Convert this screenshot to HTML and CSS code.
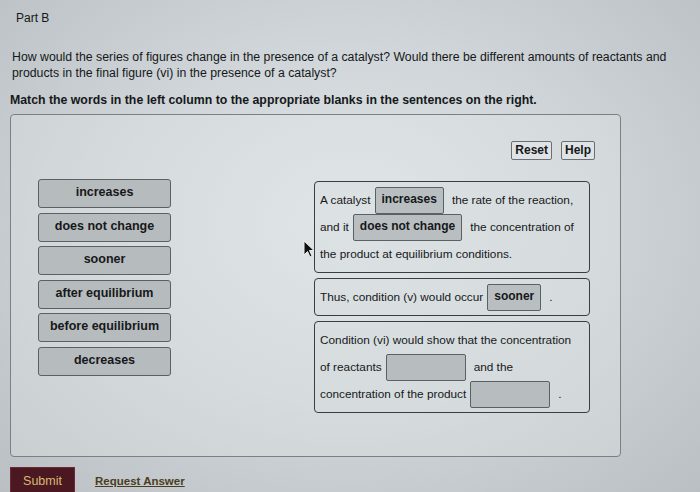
FILE: index.html
```html
<!DOCTYPE html>
<html lang="en">
<head>
    <meta charset="UTF-8">
    <meta name="viewport" content="width=device-width, initial-scale=1.0">
    <title>Part B</title>
    <link rel="stylesheet" href="styles.css">
</head>
<body>
    <h2 class="part">Part B</h2>
    <p class="prompt">How would the series of figures change in the presence of a catalyst? Would there be different amounts of reactants and products in the final figure (vi) in the presence of a catalyst?</p>
    <p class="instructions">Match the words in the left column to the appropriate blanks in the sentences on the right.</p>

    <div class="panel">
        <div class="toolbar">
            <button class="tool-btn">Reset</button>
            <button class="tool-btn">Help</button>
        </div>
        <div class="board">
            <div class="bank">
                <div class="chip">increases</div>
                <div class="chip">does not change</div>
                <div class="chip">sooner</div>
                <div class="chip">after equilibrium</div>
                <div class="chip">before equilibrium</div>
                <div class="chip">decreases</div>
            </div>
            <div class="sentences">
                <div class="sentence">
                    A catalyst<span class="blank filled">increases</span>the rate of the reaction,<br>
                    and it<span class="blank filled">does not change</span>the concentration of<br>
                    the product at equilibrium conditions.
                </div>
                <div class="sentence">
                    Thus, condition (v) would occur<span class="blank filled">sooner</span>.
                </div>
                <div class="sentence">
                    Condition (vi) would show that the concentration<br>
                    of reactants<span class="blank empty"></span>and the<br>
                    concentration of the product<span class="blank empty"></span>.
                </div>
            </div>
        </div>
        <svg class="cursor" width="12" height="18" viewBox="0 0 12 18">
            <path d="M1 1 L1 15 L4.5 11.5 L7 17 L9 16 L6.5 10.5 L11 10.5 Z" fill="#111" stroke="#eee" stroke-width="1"/>
        </svg>
    </div>

    <div class="actions">
        <button class="submit">Submit</button>
        <a class="request" href="#">Request Answer</a>
    </div>
</body>
</html>
```

FILE: styles.css
```css
body {
    margin: 0;
    padding: 0 0 0 10px;
    font-family: "Liberation Sans", Arial, sans-serif;
    color: #16181a;
    background: radial-gradient(ellipse at 50% 45%, #dfe4e6 0%, #d0d6d9 45%, #b9bfc2 100%);
    min-height: 492px;
    overflow: hidden;
}
.part {
    font-size: 12px;
    font-weight: normal;
    margin: 11px 0 0 6px;
    line-height: 14px;
}
.prompt {
    font-size: 12.3px;
    line-height: 16px;
    margin: 24px 0 0 2px;
    width: 670px;
}
.instructions {
    font-size: 12.3px;
    font-weight: bold;
    margin: 12px 0 0 0;
    line-height: 14px;
}
.panel {
    position: relative;
    width: 611px;
    height: 343px;
    margin-top: 7px;
    border: 1px solid #7a8084;
    border-radius: 4px;
    background: rgba(226, 231, 233, 0.35);
    box-sizing: border-box;
}
.toolbar {
    display: flex;
    justify-content: flex-end;
    gap: 9px;
    padding: 26px 25px 0 0;
}
.tool-btn {
    font-family: inherit;
    font-size: 12px;
    font-weight: bold;
    color: #16181a;
    background: #dfe3e5;
    border: 1px solid #6a6f73;
    border-radius: 2px;
    padding: 2px 3px;
    line-height: 13px;
}
.board {
    display: flex;
    padding: 19px 0 0 27px;
}
.bank {
    display: flex;
    flex-direction: column;
    gap: 4.6px;
    width: 133px;
}
.chip {
    height: 29px;
    box-sizing: border-box;
    background: #b6bbbe;
    border: 1px solid #5b6064;
    border-radius: 3px;
    font-size: 12.5px;
    font-weight: bold;
    text-align: center;
    line-height: 18px;
    padding-top: 3px;
}
.sentences {
    display: flex;
    flex-direction: column;
    gap: 5px;
    margin: 2px 0 0 143px;
    width: 276px;
}
.sentence {
    border: 1px solid #3a3e41;
    border-radius: 4px;
    padding: 5px 5px 4px;
    font-size: 11.8px;
    line-height: 27px;
    white-space: nowrap;
    background: rgba(214, 220, 223, 0.4);
}
.blank {
    display: inline-block;
    vertical-align: middle;
    height: 27px;
    box-sizing: border-box;
    border: 1px solid #5b6064;
    border-radius: 2px;
    background: #b9bec1;
    line-height: 23px;
    margin: -3px 8px -3px 4px;
}
.blank.filled {
    font-weight: bold;
    padding: 0 6px;
    font-size: 12px;
}
.blank.empty {
    width: 80px;
    background: #b7bcbf;
}
.cursor {
    position: absolute;
    left: 292px;
    top: 125px;
}
.actions {
    display: flex;
    align-items: center;
    gap: 20px;
    margin-top: 10px;
}
.submit {
    font-family: inherit;
    font-size: 12.5px;
    color: #d8b972;
    background: #4b1822;
    border: 1px solid #6a2a33;
    width: 65px;
    height: 28px;
    padding: 0;
    text-align: center;
}
.request {
    font-size: 11.5px;
    font-weight: bold;
    color: #4b3d1c;
    text-decoration: underline;
}
```
